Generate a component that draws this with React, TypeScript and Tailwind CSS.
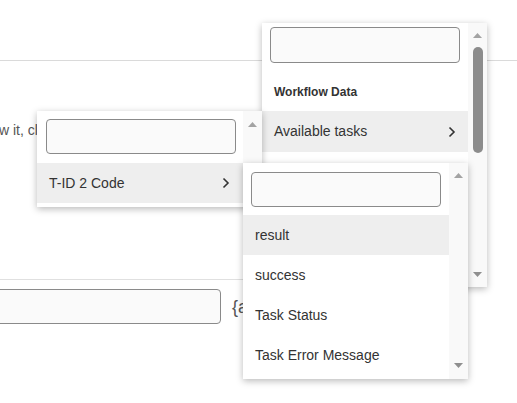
import React from "react";

const font = "font-['Liberation_Sans',Arial,sans-serif]";

function Up() {
  return (
    <svg width="9" height="5" viewBox="0 0 9 5" className="block">
      <polygon points="0,5 4.5,0 9,5" fill="#a3a3a3" />
    </svg>
  );
}
function Down() {
  return (
    <svg width="9" height="5" viewBox="0 0 9 5" className="block">
      <polygon points="0,0 9,0 4.5,5" fill="#8f8f8f" />
    </svg>
  );
}
function Chevron() {
  return (
    <svg width="8" height="12" viewBox="0 0 8 12" className="block">
      <polyline points="1.5,1.5 6,6 1.5,10.5" fill="none" stroke="#333" strokeWidth="1.6" />
    </svg>
  );
}

function SearchBox({ h = 35 }: { h?: number }) {
  return (
    <div
      className={`w-[190px] ${h === 36 ? "h-[36px]" : "h-[35px]"} rounded-[4px] border border-[#8a8a8a] bg-[#fafafa]`}
    />
  );
}

export default function App() {
  return (
    <div className={`relative w-[517px] h-[403px] bg-white overflow-hidden ${font}`}>
      {/* background page */}
      <div className="h-[61px] border-b border-[#dadada]" />
      <p className="mt-[59px] h-[20px] text-[14px] leading-[20px] text-[#555] whitespace-nowrap -ml-[1px]">
        w it, click here
      </p>
      <div className="mt-[139px] w-[260px] border-t border-[#e0e0e0]" />
      <div className="mt-[9px] flex items-center gap-[11px]">
        <div className="-ml-[10px] w-[231px] h-[35px] rounded-[4px] border border-[#8a8a8a] bg-[#fafafa]" />
        <span className="text-[18px] text-[#555] leading-[20px]">{"{a"}</span>
      </div>

      {/* menu 1 */}
      <div className="absolute left-[262px] top-[23px] w-[225px] h-[264px] bg-white shadow-[0_2px_7px_rgba(0,0,0,0.28)] flex">
        <div className="w-[206px] flex flex-col">
          <div className="pl-[8px] pt-[4px]">
            <SearchBox h={36} />
          </div>
          <div className="h-[48px] pl-[12px] flex items-end pb-[12px] text-[12px] leading-[14px] font-bold text-[#333]">
            Workflow Data
          </div>
          <div className="h-[41px] bg-[#eeeeee] pl-[12px] pr-[12px] flex items-center justify-between text-[14px] text-[#333]">
            <span>Available tasks</span>
            <Chevron />
          </div>
        </div>
        <div className="flex-1 bg-[#f9f9f9] flex flex-col items-center">
          <div className="mt-[10px]"><Up /></div>
          <div className="mt-[9px] w-[10px] h-[106px] rounded-[5px] bg-[#8c8c8c]" />
          <div className="mt-auto mb-[10px]"><Down /></div>
        </div>
      </div>

      {/* menu 2 */}
      <div className="absolute left-[37px] top-[111px] w-[225px] h-[96px] bg-white shadow-[0_2px_7px_rgba(0,0,0,0.28)] flex">
        <div className="w-[206px] flex flex-col">
          <div className="pl-[9px] pt-[8px]">
            <SearchBox />
          </div>
          <div className="mt-[9px] h-[40px] bg-[#eeeeee] pl-[12px] pr-[13px] flex items-center justify-between text-[14px] text-[#333]">
            <span>T-ID 2 Code</span>
            <Chevron />
          </div>
        </div>
        <div className="flex-1 bg-[#f9f9f9] flex flex-col items-center">
          <div className="mt-[11px]"><Up /></div>
        </div>
      </div>

      {/* menu 3 */}
      <div className="absolute left-[243px] top-[163px] w-[225px] h-[216px] bg-white shadow-[0_2px_7px_rgba(0,0,0,0.28)] flex">
        <div className="w-[206px] flex flex-col">
          <div className="pl-[8px] pt-[9px]">
            <SearchBox />
          </div>
          <div className="mt-[8px] flex flex-col text-[14px] text-[#333]">
            <div className="h-[40px] bg-[#eeeeee] pl-[12px] flex items-center">result</div>
            <div className="h-[40px] pl-[12px] flex items-center">success</div>
            <div className="h-[40px] pl-[12px] flex items-center">Task Status</div>
            <div className="h-[40px] pl-[12px] flex items-center">Task Error Message</div>
          </div>
        </div>
        <div className="flex-1 bg-[#f9f9f9] flex flex-col items-center">
          <div className="mt-[10px]"><Up /></div>
          <div className="mt-auto mb-[11px]"><Down /></div>
        </div>
      </div>
    </div>
  );
}
